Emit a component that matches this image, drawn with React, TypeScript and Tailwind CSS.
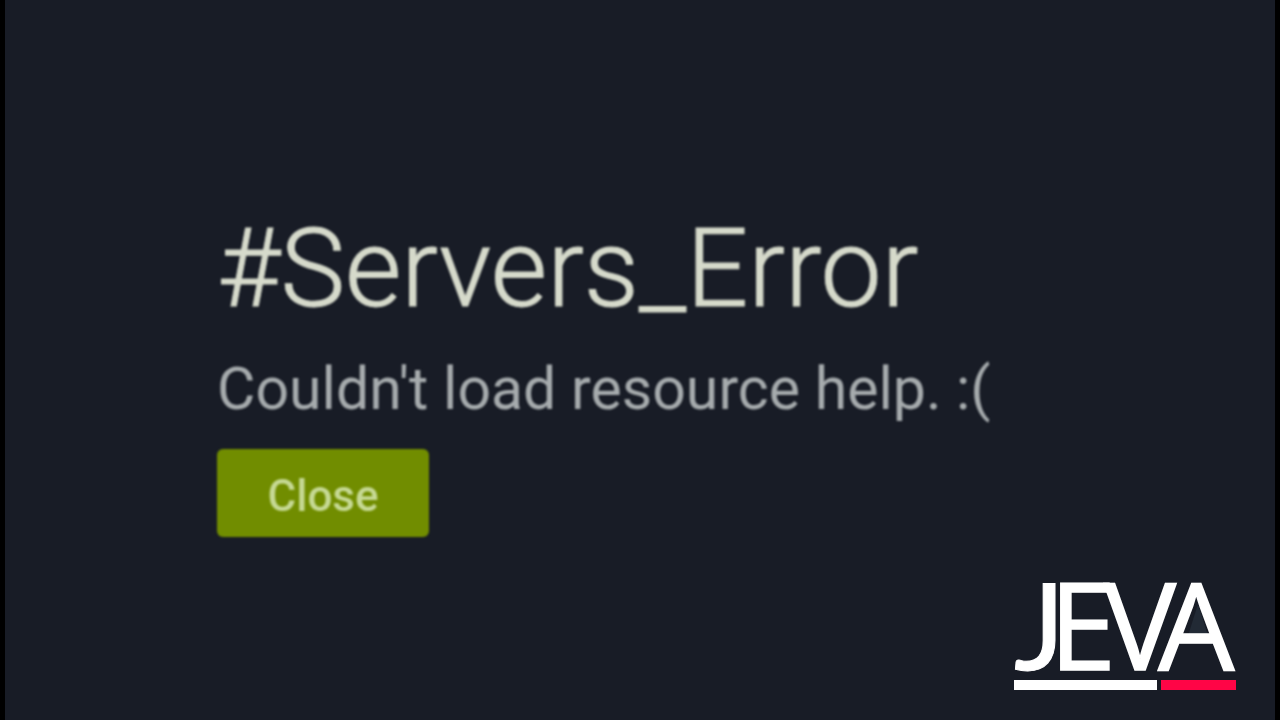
function Logo() {
  return (
    <svg viewBox="0 0 222 110" className="h-[110px] w-[222px] overflow-visible" role="img" aria-label="JEVA">
      <polygon points="184,24 196,62 172,62" fill="#222a35" />
      <text
        x="0 35 90 144"
        y="90"
        fontSize="121"
        fill="#ffffff"
        stroke="#ffffff"
        strokeWidth="1.5"
        fontFamily="'Open Sans', sans-serif"
      >
        <tspan fontFamily="Lato, sans-serif" strokeWidth="1">J</tspan>EVA
      </text>
      <rect x="0" y="100" width="143" height="10" fill="#ffffff" />
      <rect x="147" y="100" width="75" height="10" fill="#ff0546" />
    </svg>
  );
}

export default function App() {
  return (
    <div className="flex min-h-screen flex-col border-x-[5px] border-black bg-[#181c26] font-['Roboto',sans-serif]">
      <main className="flex flex-1 flex-col items-start pt-[207px] pl-[212px]">
        <h1 className="text-[109px] leading-[124px] font-light whitespace-nowrap text-[#d6dacb] blur-[1px] [-webkit-text-stroke:1px]">
          #Servers_Error
        </h1>
        <p className="mt-5 text-[59px] leading-[76px] whitespace-nowrap text-[#a6abad] blur-[1px]">
          Couldn't load resource help. :(
        </p>
        <button
          type="button"
          className="mt-[22px] h-[88px] w-[212px] rounded-md bg-[#718d00] pt-1.5 text-[44px] font-medium text-[#c6d994] blur-[1px]"
        >
          Close
        </button>
      </main>
      <footer className="flex justify-end pr-[39px] pb-[30px]">
        <Logo />
      </footer>
    </div>
  );
}
